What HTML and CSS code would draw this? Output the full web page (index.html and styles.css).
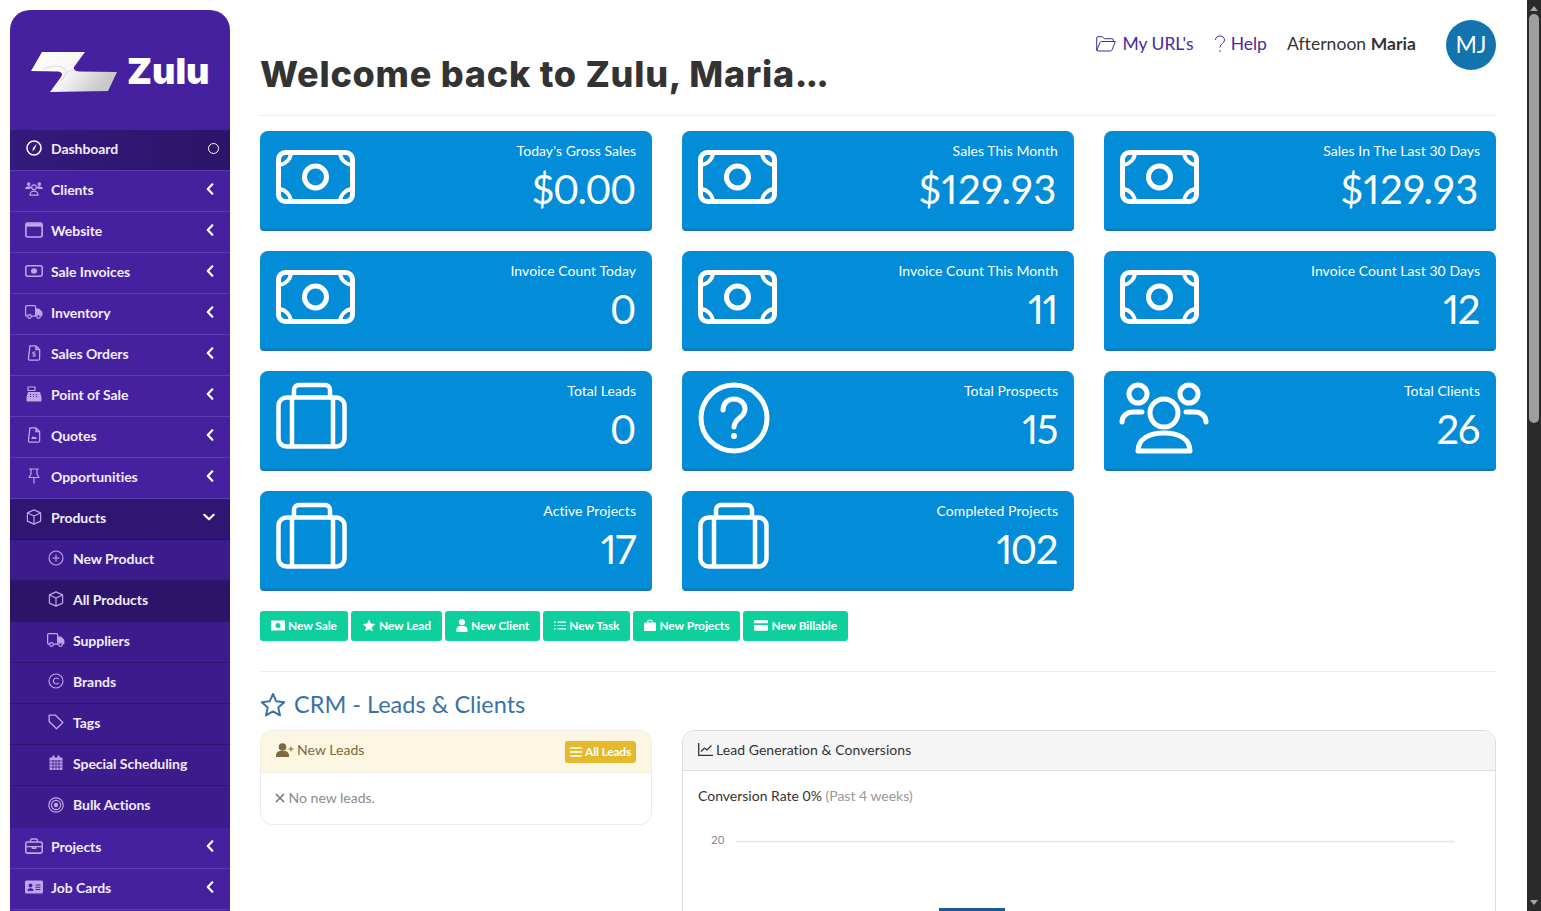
FILE: index.html
```html
<!DOCTYPE html>
<html lang="en">
<head>
  <meta charset="UTF-8">
  <title>Zulu - Dashboard</title>
  <meta name="viewport" content="width=device-width, initial-scale=1.0">
  <link rel="stylesheet" href="styles.css">
</head>
<body>

<svg class="defs" width="0" height="0">
  <defs>
    <linearGradient id="logo-grad" x1="0" y1="0" x2="1" y2="0.4">
      <stop offset="0" stop-color="#ffffff"/>
      <stop offset="0.55" stop-color="#f6f6f6"/>
      <stop offset="1" stop-color="#c9c9c9"/>
    </linearGradient>
    <!-- big card icons -->
    <symbol id="c-money" viewBox="0 0 80 54">
      <g fill="none" stroke="#fff" stroke-width="5" stroke-linecap="round" stroke-linejoin="round">
        <rect x="2.5" y="2.5" width="74" height="49" rx="7"/>
        <circle cx="39.5" cy="27" r="11"/>
      </g>
      <path d="M4 15C10 14 14 9 15 4M64 4C65 9 69 14 75 15M4 39C10 40 14 45 15 50M64 50C65 45 69 40 75 39" fill="none" stroke="#fff" stroke-width="4" stroke-linecap="round"/>
    </symbol>
    <symbol id="c-case" viewBox="0 0 72 68">
      <g fill="none" stroke="#fff" stroke-width="4.500" stroke-linecap="round" stroke-linejoin="round">
        <rect x="2.5" y="15.5" width="66" height="49" rx="8"/>
        <path d="M18 15V8a5 5 0 0 1 5-5h26a5 5 0 0 1 5 5v7M16 16v48M57 16v48"/>
      </g>
    </symbol>
    <symbol id="c-help" viewBox="0 0 72 72">
      <g fill="none" stroke="#fff" stroke-width="5" stroke-linecap="round" stroke-linejoin="round">
        <circle cx="36" cy="36" r="33"/>
        <path d="M25 28c0-7 5-11 11-11s11 4 11 10c0 9-11 9-11 18"/>
      </g>
      <circle cx="36" cy="54" r="3" fill="#fff"/>
    </symbol>
    <symbol id="c-users" viewBox="0 0 90 74">
      <g fill="none" stroke="#fff" stroke-width="5" stroke-linecap="round" stroke-linejoin="round">
        <circle cx="19" cy="13" r="9"/>
        <circle cx="70" cy="13" r="9"/>
        <circle cx="45" cy="32" r="14"/>
        <path d="M3 41c0-6 5-10 11-10h9M87 41c0-6-5-10-11-10h-9"/>
        <path d="M19 70c0-12 11-18 26-18s26 6 26 18z"/>
      </g>
    </symbol>
    <!-- sidebar icons -->
    <symbol id="s-clients" viewBox="0 0 20 18">
      <g fill="currentColor"><circle cx="4" cy="3.5" r="2"/><circle cx="16" cy="3.5" r="2"/><path d="M0 9c0-2 2-3 4-3s2.500.6 3 1.500L5 9zM20 9c0-2-2-3-4-3s-2.500.6-3 1.500L15 9z"/></g>
      <g fill="none" stroke="currentColor" stroke-width="1.400"><circle cx="10" cy="7" r="2.600"/><path d="M5.500 16c0-3 2-4.500 4.500-4.500s4.500 1.500 4.500 4.500z"/></g>
    </symbol>
    <symbol id="s-web" viewBox="0 0 16 14">
      <rect x=".8" y=".8" width="14.400" height="12.400" rx="1.500" fill="none" stroke="currentColor" stroke-width="1.500"/>
      <path d="M1 1h14v3H1z" fill="currentColor"/>
    </symbol>
    <symbol id="s-sale" viewBox="0 0 18 12">
      <rect x=".8" y=".8" width="16.400" height="10.400" rx="2" fill="none" stroke="currentColor" stroke-width="1.500"/>
      <ellipse cx="9" cy="6" rx="3" ry="2.800" fill="currentColor"/>
    </symbol>
    <symbol id="s-truck" viewBox="0 0 20 16">
      <g fill="none" stroke="currentColor" stroke-width="1.400" stroke-linejoin="round">
        <path d="M3 12.500H2a1.300 1.300 0 0 1-1.300-1.300V2A1.300 1.300 0 0 1 2 .8h8.500A1.300 1.300 0 0 1 11.800 2v10.500H7"/>
        <circle cx="5" cy="13" r="2"/><circle cx="15" cy="13" r="2"/>
      </g>
      <path d="M12 4h3.500l3.800 3.800v5h-2V11h-5z" fill="currentColor"/>
    </symbol>
    <symbol id="s-file" viewBox="0 0 12 16">
      <path d="M1.500.8h6l3.700 3.700v9.200a1.500 1.500 0 0 1-1.500 1.500h-8.200A1.500 1.500 0 0 1 0 13.700zM7.500 1v3.500h3.500" transform="translate(.4)" fill="none" stroke="currentColor" stroke-width="1.300"/>
      <path d="M6 7v5M4.500 11h2a1 1 0 0 0 0-2h-1a1 1 0 0 1 0-2H7.500" fill="none" stroke="currentColor" stroke-width=".9"/>
    </symbol>
    <symbol id="s-quote" viewBox="0 0 12 16">
      <path d="M1.500.8h6l3.700 3.700v9.200a1.500 1.500 0 0 1-1.500 1.500h-8.200A1.500 1.500 0 0 1 0 13.700zM7.500 1v3.500h3.500" transform="translate(.4)" fill="none" stroke="currentColor" stroke-width="1.300"/>
      <path d="M3 12l2-3 1.500 1.500 1-1L9 12z" fill="currentColor"/>
    </symbol>
    <symbol id="s-pos" viewBox="0 0 16 16">
      <path d="M2 1h7v3.500H2z" fill="none" stroke="currentColor" stroke-width="1.200"/>
      <path d="M2 6h12l1.500 5v3.500a1 1 0 0 1-1 1h-13a1 1 0 0 1-1-1V11z" fill="currentColor"/>
      <path d="M4 8.500h1M7 8.500h1M10 8.500h1M4 10.500h1M7 10.500h1M10 10.500h1" stroke="#45219f" stroke-width="1"/>
    </symbol>
    <symbol id="s-pin" viewBox="0 0 12 16">
      <path d="M1 1h10M3 1v5L1 9.500h10L9 6V1M6 9.500V15.500" fill="none" stroke="currentColor" stroke-width="1.200" stroke-linejoin="round"/>
    </symbol>
    <symbol id="s-box" viewBox="0 0 16 16">
      <path d="M8 .9l6.600 3v8.200L8 15.100l-6.600-3V3.900zM1.500 4L8 7l6.500-3M8 7v8" fill="none" stroke="currentColor" stroke-width="1.200" stroke-linejoin="round"/>
    </symbol>
    <symbol id="s-plus" viewBox="0 0 16 16">
      <circle cx="8" cy="8" r="7" fill="none" stroke="currentColor" stroke-width="1.100"/>
      <path d="M8 4.500v7M4.500 8h7" stroke="currentColor" stroke-width="1.100"/>
    </symbol>
    <symbol id="s-copy" viewBox="0 0 16 16">
      <circle cx="8" cy="8" r="7" fill="none" stroke="currentColor" stroke-width="1.100"/>
      <path d="M10.600 6A3 3 0 1 0 10.600 10" fill="none" stroke="currentColor" stroke-width="1.200"/>
    </symbol>
    <symbol id="s-tag" viewBox="0 0 14 14">
      <path d="M1 1h5.500L13 7.500 7.500 13 1 6.500z" fill="none" stroke="currentColor" stroke-width="1.200" stroke-linejoin="round"/>
    </symbol>
    <symbol id="s-cal" viewBox="0 0 14 16">
      <path d="M1.500 2.500h11a1 1 0 0 1 1 1v10.500a1 1 0 0 1-1 1h-11a1 1 0 0 1-1-1V3.500a1 1 0 0 1 1-1zM3.500.5h2v2h-2zM8.500.5h2v2h-2z" fill="currentColor"/>
      <path d="M.5 6h13M.5 9h13M.5 12h13M4 5v10M7 5v10M10 5v10" stroke="#3a1b88" stroke-width=".8"/>
    </symbol>
    <symbol id="s-target" viewBox="0 0 16 16">
      <g fill="none" stroke="currentColor" stroke-width="1.200"><circle cx="8" cy="8" r="7.200"/><circle cx="8" cy="8" r="4.600"/></g>
      <circle cx="8" cy="8" r="2.200" fill="currentColor"/>
    </symbol>
    <symbol id="s-case" viewBox="0 0 16 14">
      <path d="M5 3.500V1.800A1 1 0 0 1 6 .8h4a1 1 0 0 1 1 1v1.700" fill="none" stroke="currentColor" stroke-width="1.200"/>
      <rect x=".7" y="3.500" width="14.600" height="9.800" rx="1.500" fill="none" stroke="currentColor" stroke-width="1.400"/>
      <path d="M1 7.500h14M6.500 7.500v1.500h3V7.500" fill="none" stroke="currentColor" stroke-width="1.200"/>
    </symbol>
    <symbol id="s-card" viewBox="0 0 18 13">
      <rect width="18" height="13" rx="1.500" fill="currentColor"/>
      <circle cx="5.500" cy="5" r="2" fill="#45219f"/>
      <path d="M2.500 10.500c0-2 1.200-2.700 3-2.700s3 .7 3 2.700z" fill="#45219f"/>
      <path d="M10.500 4.500h5M10.500 6.800h5M10.500 9h5" stroke="#45219f" stroke-width="1.100"/>
    </symbol>
    <symbol id="s-gauge" viewBox="0 0 16 16">
      <circle cx="8" cy="8" r="7" fill="none" stroke="currentColor" stroke-width="1.500"/>
      <path d="M10.800 3.800L8.700 9 6.500 11.500 6.900 8z" fill="currentColor"/>
    </symbol>
    <symbol id="s-chev" viewBox="0 0 8 12">
      <path d="M6.300 1.300L1.800 6l4.500 4.700" fill="none" stroke="currentColor" stroke-width="2.200" stroke-linecap="round" stroke-linejoin="round"/>
    </symbol>
    <symbol id="s-down" viewBox="0 0 12 8">
      <path d="M1.300 1.800L6 6.300l4.700-4.500" fill="none" stroke="currentColor" stroke-width="2.200" stroke-linecap="round" stroke-linejoin="round"/>
    </symbol>
    <!-- button icons -->
    <symbol id="b-money" viewBox="0 0 14 10">
      <path d="M0 0h14v10H0z" fill="currentColor"/>
      <circle cx="7" cy="5" r="2.500" fill="#0fd09c"/>
    </symbol>
    <symbol id="b-star" viewBox="0 0 14 14">
      <path d="M7 .5l2 4.300 4.700.6-3.500 3.200.9 4.700L7 11l-4.100 2.300.9-4.700L.3 5.400l4.700-.6z" fill="currentColor"/>
    </symbol>
    <symbol id="b-user" viewBox="0 0 12 14">
      <circle cx="6" cy="3.500" r="3.300" fill="currentColor"/>
      <path d="M0 14v-2.500C0 9 2 7.500 4 7.500h4c2 0 4 1.500 4 4V14z" fill="currentColor"/>
    </symbol>
    <symbol id="b-list" viewBox="0 0 14 11">
      <path d="M4 1.500h10M4 5.500h10M4 9.500h10M0 1.500h2M0 5.500h2M0 9.500h2" stroke="currentColor" stroke-width="1.400"/>
    </symbol>
    <symbol id="b-case" viewBox="0 0 14 13">
      <path d="M4.500 3V1.500a1 1 0 0 1 1-1h3a1 1 0 0 1 1 1V3" fill="none" stroke="currentColor" stroke-width="1.200"/>
      <path d="M1 3h12a1 1 0 0 1 1 1v8a1 1 0 0 1-1 1H1a1 1 0 0 1-1-1V4a1 1 0 0 1 1-1z" fill="currentColor"/>
    </symbol>
    <symbol id="b-bill" viewBox="0 0 15 11">
      <path d="M1 0h13a1 1 0 0 1 1 1v2H0V1a1 1 0 0 1 1-1zM0 5h15v5a1 1 0 0 1-1 1H1a1 1 0 0 1-1-1z" fill="currentColor"/>
    </symbol>
  </defs>
</svg>

<aside class="sidebar">
  <div class="logo">
    <svg class="logo-mark" viewBox="0 0 88 42" width="88" height="42">
      <path d="M1 20L12 1h43L44 16C43 19 46 20 49 20.500L87 21 78 40 20 41 31 26C33 23 32 21 28 20.500z" fill="url(#logo-grad)"/>
      <path d="M13 18C22 14 36 14 36 21 36 24 33 27 31 30L34 26C38 21 39 17 48 21" fill="none" stroke="#dcdcdc" stroke-width="1"/>
    </svg>
    <span class="logo-text">Zulu</span>
  </div>

  <ul class="menu">
    <li class="menu-item active"><svg class="mi white"><use href="#s-gauge"/></svg><span>Dashboard</span><i class="dot"></i></li>
    <li class="menu-item"><svg class="mi"><use href="#s-clients"/></svg><span>Clients</span><svg class="chev"><use href="#s-chev"/></svg></li>
    <li class="menu-item"><svg class="mi"><use href="#s-web"/></svg><span>Website</span><svg class="chev"><use href="#s-chev"/></svg></li>
    <li class="menu-item"><svg class="mi"><use href="#s-sale"/></svg><span>Sale Invoices</span><svg class="chev"><use href="#s-chev"/></svg></li>
    <li class="menu-item"><svg class="mi"><use href="#s-truck"/></svg><span>Inventory</span><svg class="chev"><use href="#s-chev"/></svg></li>
    <li class="menu-item"><svg class="mi"><use href="#s-file"/></svg><span>Sales Orders</span><svg class="chev"><use href="#s-chev"/></svg></li>
    <li class="menu-item"><svg class="mi"><use href="#s-pos"/></svg><span>Point of Sale</span><svg class="chev"><use href="#s-chev"/></svg></li>
    <li class="menu-item"><svg class="mi"><use href="#s-quote"/></svg><span>Quotes</span><svg class="chev"><use href="#s-chev"/></svg></li>
    <li class="menu-item"><svg class="mi"><use href="#s-pin"/></svg><span>Opportunities</span><svg class="chev"><use href="#s-chev"/></svg></li>
    <li class="menu-item open"><svg class="mi"><use href="#s-box"/></svg><span>Products</span><svg class="down"><use href="#s-down"/></svg></li>
    <li class="sub-item"><svg class="mi"><use href="#s-plus"/></svg><span>New Product</span></li>
    <li class="sub-item current"><svg class="mi"><use href="#s-box"/></svg><span>All Products</span></li>
    <li class="sub-item"><svg class="mi"><use href="#s-truck"/></svg><span>Suppliers</span></li>
    <li class="sub-item"><svg class="mi"><use href="#s-copy"/></svg><span>Brands</span></li>
    <li class="sub-item"><svg class="mi"><use href="#s-tag"/></svg><span>Tags</span></li>
    <li class="sub-item"><svg class="mi"><use href="#s-cal"/></svg><span>Special Scheduling</span></li>
    <li class="sub-item last"><svg class="mi"><use href="#s-target"/></svg><span>Bulk Actions</span></li>
    <li class="menu-item"><svg class="mi"><use href="#s-case"/></svg><span>Projects</span><svg class="chev"><use href="#s-chev"/></svg></li>
    <li class="menu-item"><svg class="mi"><use href="#s-card"/></svg><span>Job Cards</span><svg class="chev"><use href="#s-chev"/></svg></li>
  </ul>
</aside>

<main class="content">
  <header class="topbar">
    <h1>Welcome back to Zulu, Maria<span class="dots">...</span></h1>
    <nav class="topnav">
      <a class="toplink">
        <svg class="folder" viewBox="0 0 20 16" width="20" height="16"><path d="M.7 13.500V2A1.300 1.300 0 0 1 2 .7h4.500l2 2H16A1.300 1.300 0 0 1 17.300 4v1.500M.7 14.500L4 6.500A1.500 1.500 0 0 1 5.300 5.500H19.300L16 14A1.500 1.500 0 0 1 14.700 15H2A1.300 1.300 0 0 1 .7 13.500z" fill="none" stroke="currentColor" stroke-width="1"/></svg>
        My URL's
      </a>
      <a class="toplink help">
        <svg class="qmark" viewBox="0 0 12 18" width="12" height="18"><path d="M1.500 5C1.500 2.500 3.500 1 6 1s4.500 1.500 4.500 4c0 3.500-4.500 3.500-4.500 7.500" fill="none" stroke="currentColor" stroke-width="1"/><circle cx="6" cy="16" r=".8" fill="currentColor"/></svg>
        Help
      </a>
      <span class="greeting">Afternoon <b>Maria</b></span>
      <span class="avatar">MJ</span>
    </nav>
  </header>

  <section class="stats">
    <div class="stat"><svg class="icon-money"><use href="#c-money"/></svg><div class="stat-text"><p>Today's Gross Sales</p><strong>$0.00</strong></div></div>
    <div class="stat"><svg class="icon-money"><use href="#c-money"/></svg><div class="stat-text"><p>Sales This Month</p><strong class="wide">$129.93</strong></div></div>
    <div class="stat"><svg class="icon-money"><use href="#c-money"/></svg><div class="stat-text"><p>Sales In The Last 30 Days</p><strong class="wide">$129.93</strong></div></div>
    <div class="stat"><svg class="icon-money"><use href="#c-money"/></svg><div class="stat-text"><p>Invoice Count Today</p><strong>0</strong></div></div>
    <div class="stat"><svg class="icon-money"><use href="#c-money"/></svg><div class="stat-text"><p>Invoice Count This Month</p><strong>11</strong></div></div>
    <div class="stat"><svg class="icon-money"><use href="#c-money"/></svg><div class="stat-text"><p>Invoice Count Last 30 Days</p><strong>12</strong></div></div>
    <div class="stat"><svg class="icon-case"><use href="#c-case"/></svg><div class="stat-text"><p>Total Leads</p><strong>0</strong></div></div>
    <div class="stat"><svg class="icon-help"><use href="#c-help"/></svg><div class="stat-text"><p>Total Prospects</p><strong>15</strong></div></div>
    <div class="stat"><svg class="icon-users"><use href="#c-users"/></svg><div class="stat-text"><p>Total Clients</p><strong>26</strong></div></div>
    <div class="stat"><svg class="icon-case"><use href="#c-case"/></svg><div class="stat-text"><p>Active Projects</p><strong>17</strong></div></div>
    <div class="stat"><svg class="icon-case"><use href="#c-case"/></svg><div class="stat-text"><p>Completed Projects</p><strong>102</strong></div></div>
  </section>

  <div class="quick">
    <a class="btn"><svg class="bi"><use href="#b-money"/></svg>New Sale</a>
    <a class="btn"><svg class="bi"><use href="#b-star"/></svg>New Lead</a>
    <a class="btn"><svg class="bi narrow"><use href="#b-user"/></svg>New Client</a>
    <a class="btn"><svg class="bi narrow"><use href="#b-list"/></svg>New Task</a>
    <a class="btn"><svg class="bi narrow"><use href="#b-case"/></svg>New Projects</a>
    <a class="btn"><svg class="bi"><use href="#b-bill"/></svg>New Billable</a>
  </div>

  <hr class="rule">

  <h2 class="section-title">
    <svg class="star" viewBox="0 0 26 25" width="26" height="25"><path d="M13 2l3.300 7.300 7.900.9-5.900 5.400 1.700 7.800L13 19.400l-7 4 1.700-7.800L1.800 10.200l7.900-.9z" fill="none" stroke="currentColor" stroke-width="2" stroke-linejoin="round"/></svg>
    CRM - Leads &amp; Clients
  </h2>

  <section class="panels">
    <div class="panel leads">
      <div class="panel-head">
        <svg class="head-icon" viewBox="0 0 18 14" width="18" height="14"><circle cx="6.500" cy="4" r="3.800" fill="currentColor"/><path d="M0 14v-1.500C0 9.500 2 8 4.500 8h4c2.500 0 4.500 1.500 4.500 4.500V14z" fill="currentColor"/><path d="M15 3.500v5M12.500 6h5" stroke="currentColor" stroke-width="1.100"/></svg>
        <span>New Leads</span>
        <a class="btn-all"><svg viewBox="0 0 12 10" width="12" height="10"><path d="M0 1h12M0 5h12M0 9h12" stroke="currentColor" stroke-width="1.300"/></svg>All Leads</a>
      </div>
      <div class="panel-body"><svg class="times" viewBox="0 0 10 10" width="10" height="10"><path d="M1 1l8 8M9 1l-8 8" stroke="currentColor" stroke-width="1.600"/></svg> No new leads.</div>
    </div>

    <div class="panel chart-panel">
      <div class="panel-head">
        <svg class="head-icon" viewBox="0 0 15 13" width="15" height="13"><path d="M.7 0v12.300H15M3 8.500l3.500-3.500 2.500 2 4.500-4.500" fill="none" stroke="currentColor" stroke-width="1.300"/></svg>
        <span>Lead Generation &amp; Conversions</span>
      </div>
      <div class="panel-body">
        <p class="rate">Conversion Rate 0% <span>(Past 4 weeks)</span></p>
        <svg class="chart" width="782" height="125" viewBox="0 0 782 125">
          <text x="13" y="39" class="tick">20</text>
          <line x1="38" x2="757" y1="36.500" y2="36.500" stroke="#e6e6e6" stroke-width="1.500"/>
          <rect x="241" y="103" width="66" height="22" fill="#1b5c96"/>
        </svg>
      </div>
    </div>
  </section>
</main>

<div class="scrollbar">
  <span class="arrow-up"></span>
  <span class="thumb"></span>
  <span class="arrow-down"></span>
</div>

</body>
</html>
```

FILE: styles.css
```css
* {
  box-sizing: border-box;
}

html, body {
  height: 911px;
}

body {
  margin: 0;
  display: flex;
  overflow: hidden;
  font-family: 'Lato', 'Open Sans', sans-serif;
  background-color: #fff;
  color: #333;
}

.defs {
  position: absolute;
}

/* sidebar */
.sidebar {
  flex: 0 0 220px;
  margin: 10px 0 0 10px;
  height: 1200px;
  background-color: #45219f;
  border-radius: 20px 20px 0 0;
  color: #fff;
}

.logo {
  height: 120px;
  padding: 40px 0 0 20px;
  display: flex;
  align-items: flex-start;
}

.logo-mark {
  margin-top: 1px;
}

.logo-text {
  margin: 0 0 0 9px;
  font-family: 'Inter', sans-serif;
  font-weight: 900;
  font-size: 36px;
  line-height: 42px;
}

.menu {
  list-style: none;
  margin: 0;
  padding: 0;
}

.menu-item, .sub-item {
  display: flex;
  align-items: center;
  height: 41px;
  font-size: 14px;
  font-weight: 700;
  letter-spacing: -0.05px;
  color: #f1ecfb;
  border-bottom: 1px solid #5a3bb0;
  padding: 0 0 4px 15px;
}

.menu-item .mi {
  width: 18px;
  height: 16px;
  margin-right: 8px;
  color: #bfa6ec;
}

.menu-item .mi.white {
  color: #fff;
}

.menu-item.active {
  background: linear-gradient(90deg, #341a7c, #2c1469);
}

.menu-item.open {
  background-color: #2f1673;
  border-bottom-color: #26105f;
}

.sub-item {
  padding-left: 37px;
  background-color: #3c1c8c;
  border-bottom-color: #2d1570;
}

.sub-item .mi {
  width: 18px;
  height: 16px;
  margin-right: 8px;
  color: #bfa6ec;
}

.sub-item.current {
  background-color: #2c1469;
}

.sub-item.last {
  height: 42px;
  padding-bottom: 5px;
  border-bottom: none;
}

.chev {
  width: 8px;
  height: 12px;
  margin-left: auto;
  margin-right: 16px;
  color: #fff;
}

.down {
  width: 12px;
  height: 8px;
  margin-left: auto;
  margin-right: 15px;
  color: #fff;
}

.dot {
  width: 11px;
  height: 11px;
  margin-left: auto;
  margin-right: 11px;
  border: 1.5px solid #fff;
  border-radius: 50%;
}

/* main */
.content {
  flex: 1;
  min-width: 0;
  padding: 0 31px 0 30px;
}

.topbar {
  display: flex;
  justify-content: space-between;
  align-items: flex-start;
  height: 116px;
  padding-top: 20px;
  border-bottom: 1px solid #ececec;
}

.topbar h1 {
  margin: 30px 0 0;
  font-family: 'Inter', sans-serif;
  font-size: 36px;
  line-height: 48px;
  font-weight: 800;
  letter-spacing: 0.75px;
  color: #333;
}

.dots {
  letter-spacing: -2px;
}

.topnav {
  display: flex;
  align-items: center;
  height: 50px;
  font-size: 17.500px;
}

.toplink {
  display: flex;
  align-items: center;
  gap: 6px;
  margin-bottom: 3px;
  color: #4a2a9e;
}

.toplink.help {
  margin-left: 20px;
  gap: 5px;
}

.folder, .qmark {
  color: #4a2a9e;
}

.greeting {
  margin: 0 0 3px 20px;
  letter-spacing: 0.05px;
}

.avatar {
  width: 50px;
  height: 50px;
  margin-left: 30px;
  padding-bottom: 2px;
  border-radius: 50%;
  background-color: #1273ae;
  color: #fff;
  font-size: 23px;
  display: flex;
  align-items: center;
  justify-content: center;
}

.stats {
  display: grid;
  grid-template-columns: repeat(3, 392px);
  gap: 20px 30px;
  margin-top: 15px;
}

.stat {
  height: 100px;
  padding: 10px 16px;
  display: flex;
  justify-content: space-between;
  background-color: #038cd8;
  border-top: 1px solid #1a80c0;
  border-bottom: 2px solid #1a75ae;
  border-radius: 8px 8px 4px 4px;
  color: #fff;
}

.stat-text {
  text-align: right;
}

.stat-text p {
  margin: 0;
  font-size: 14px;
  line-height: 17px;
  letter-spacing: 0.05px;
}

.stat-text strong {
  display: block;
  margin: 5px 1px 0 0;
  font-size: 40px;
  line-height: 50px;
  font-weight: 400;
  letter-spacing: -1.400px;
  font-variant-numeric: proportional-nums;
}

.stat-text strong.wide {
  letter-spacing: 0.6px;
}

.icon-money {
  width: 80px;
  height: 54px;
  margin-top: 8px;
}

.icon-case {
  width: 72px;
  height: 68px;
}

.icon-help {
  width: 72px;
  height: 72px;
}

.icon-users {
  width: 90px;
  height: 74px;
  margin: -1px 0 0 -1px;
}

.quick {
  display: flex;
  gap: 3px;
  margin-top: 20px;
}

.btn {
  display: flex;
  align-items: center;
  height: 30px;
  padding: 0 11px 2px;
  gap: 3px;
  background-color: #0fd09c;
  color: #fff;
  font-size: 12px;
  font-weight: 700;
  letter-spacing: -0.1px;
  border-radius: 3px;
}

.bi {
  width: 14px;
  height: 13px;
}

.bi.narrow {
  width: 12px;
}

.rule {
  border: none;
  border-top: 1px solid #ececec;
  margin: 30px 0 0;
}

.section-title {
  display: flex;
  align-items: center;
  gap: 8px;
  height: 30px;
  margin: 17px 0 0;
  font-size: 23.500px;
  font-weight: 400;
  color: #3a72a8;
}

.panels {
  display: grid;
  grid-template-columns: 392px 1fr;
  gap: 30px;
  margin-top: 11px;
  align-items: start;
}

.panel {
  border: 1px solid #ececec;
  border-radius: 12px;
  overflow: hidden;
}

.panel-head {
  display: flex;
  align-items: center;
  height: 42px;
  padding: 0 15px 3px;
  gap: 5px;
  font-size: 14px;
  letter-spacing: 0.05px;
  border-bottom: 1px solid #f2ecd8;
}

.leads .panel-head {
  padding-bottom: 4px;
  background-color: #fdf6e3;
  color: #7d6a3c;
  gap: 3px;
}

.head-icon {
  flex-shrink: 0;
}

.btn-all {
  display: flex;
  align-items: center;
  gap: 3px;
  margin: 4px 0 0 auto;
  height: 22px;
  padding: 0 5px;
  font-size: 12px;
  font-weight: 700;
  letter-spacing: -0.2px;
  color: #fff;
  background-color: #e4b92c;
  border-radius: 3px;
}

.panel-body {
  padding: 16px 14px 17px;
  font-size: 14px;
  color: #8c8c8c;
  line-height: 18px;
}

.times {
  color: #777;
}

.chart-panel {
  border-color: #ddd;
  height: 300px;
}

.chart-panel .panel-head {
  height: 40px;
  gap: 3px;
  background-color: #f5f5f5;
  border-bottom-color: #ddd;
  color: #333;
}

.chart-panel .panel-body {
  padding: 16px 15px 0;
}

.rate {
  margin: 0;
  color: #333;
}

.rate span {
  color: #999;
}

.chart {
  display: block;
}

.tick {
  font-size: 11.500px;
  fill: #888;
}

/* browser scrollbar */
.scrollbar {
  flex: 0 0 14px;
  height: 911px;
  background-color: #2b2b2b;
  display: flex;
  flex-direction: column;
  align-items: center;
}

.arrow-up {
  margin-top: 6px;
  border: 4px solid transparent;
  border-top: none;
  border-bottom: 5px solid #a8a8a8;
}

.thumb {
  width: 10px;
  height: 409px;
  margin-top: 3px;
  background-color: #9f9f9f;
  border-radius: 5px;
}

.arrow-down {
  margin-top: auto;
  margin-bottom: 6px;
  border: 4px solid transparent;
  border-bottom: none;
  border-top: 5px solid #a8a8a8;
}
```
